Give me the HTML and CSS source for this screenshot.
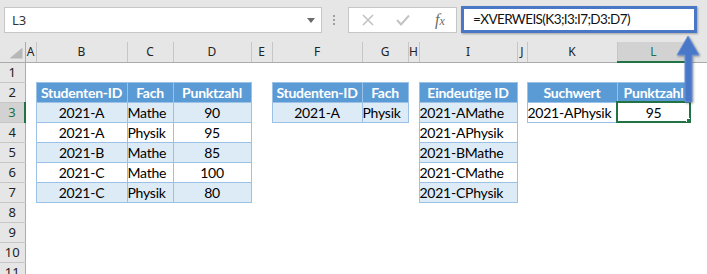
FILE: index.html
```html
<!DOCTYPE html>
<html lang="de">
<head>
  <meta charset="UTF-8">
  <title>XVERWEIS</title>
  <link rel="stylesheet" href="styles.css">
</head>
<body>
  <div class="app">
    <div class="formula-bar">
      <div class="name-box">
        <span>L3</span>
        <span class="caret"></span>
      </div>
      <div class="grip"><i></i><i></i><i></i></div>
      <div class="fx-box">
        <svg class="icon" width="14" height="14" viewBox="0 0 14 14">
          <path d="M2 2 L12 12 M12 2 L2 12" stroke="#c3c3c3" stroke-width="1.6" fill="none"/>
        </svg>
        <svg class="icon" width="16" height="14" viewBox="0 0 16 14">
          <path d="M2 7 L6 11.5 L14 2.5" stroke="#c3c3c3" stroke-width="2" fill="none"/>
        </svg>
        <span class="fx">f<small>x</small></span>
      </div>
      <div class="formula">=XVERWEIS(K3;I3:I7;D3:D7)</div>
    </div>

    <table class="sheet">
      <colgroup>
        <col class="w25"><col class="w11"><col class="w91"><col class="w46"><col class="w78">
        <col class="w21"><col class="w90"><col class="w46"><col class="w11"><col class="w98">
        <col class="w10"><col class="w90"><col class="w73"><col>
      </colgroup>
      <tr class="cols">
        <th class="corner"></th>
        <th>A</th><th>B</th><th>C</th><th>D</th><th>E</th><th>F</th><th>G</th>
        <th>H</th><th>I</th><th>J</th><th>K</th><th class="sel-col">L</th><th class="last"></th>
      </tr>
      <tr>
        <th class="row">1</th>
        <td></td><td></td><td></td><td></td><td></td><td></td><td></td><td></td><td></td><td></td><td></td><td></td><td></td>
      </tr>
      <tr>
        <th class="row">2</th>
        <td></td>
        <td class="hd">Studenten-ID</td><td class="hd">Fach</td><td class="hd">Punktzahl</td>
        <td></td>
        <td class="hd">Studenten-ID</td><td class="hd">Fach</td>
        <td></td>
        <td class="hd">Eindeutige ID</td>
        <td></td>
        <td class="hd">Suchwert</td><td class="hd">Punktzahl</td>
        <td></td>
      </tr>
      <tr>
        <th class="row sel-row">3</th>
        <td></td>
        <td class="c band ctr">2021-A</td><td class="c band">Mathe</td><td class="c band ctr">90</td>
        <td></td>
        <td class="c band ctr">2021-A</td><td class="c band">Physik</td>
        <td></td>
        <td class="c band">2021-AMathe</td>
        <td></td>
        <td class="c">2021-APhysik</td><td class="c ctr active">95</td>
        <td></td>
      </tr>
      <tr>
        <th class="row">4</th>
        <td></td>
        <td class="c ctr">2021-A</td><td class="c">Physik</td><td class="c ctr">95</td>
        <td></td><td></td><td></td><td></td>
        <td class="c">2021-APhysik</td>
        <td></td><td></td><td></td><td></td>
      </tr>
      <tr>
        <th class="row">5</th>
        <td></td>
        <td class="c band ctr">2021-B</td><td class="c band">Mathe</td><td class="c band ctr">85</td>
        <td></td><td></td><td></td><td></td>
        <td class="c band">2021-BMathe</td>
        <td></td><td></td><td></td><td></td>
      </tr>
      <tr>
        <th class="row">6</th>
        <td></td>
        <td class="c ctr">2021-C</td><td class="c">Mathe</td><td class="c ctr">100</td>
        <td></td><td></td><td></td><td></td>
        <td class="c">2021-CMathe</td>
        <td></td><td></td><td></td><td></td>
      </tr>
      <tr>
        <th class="row">7</th>
        <td></td>
        <td class="c band ctr">2021-C</td><td class="c band">Physik</td><td class="c band ctr">80</td>
        <td></td><td></td><td></td><td></td>
        <td class="c band">2021-CPhysik</td>
        <td></td><td></td><td></td><td></td>
      </tr>
      <tr>
        <th class="row">8</th>
        <td></td><td></td><td></td><td></td><td></td><td></td><td></td><td></td><td></td><td></td><td></td><td></td><td></td>
      </tr>
      <tr>
        <th class="row">9</th>
        <td></td><td></td><td></td><td></td><td></td><td></td><td></td><td></td><td></td><td></td><td></td><td></td><td></td>
      </tr>
      <tr>
        <th class="row">10</th>
        <td></td><td></td><td></td><td></td><td></td><td></td><td></td><td></td><td></td><td></td><td></td><td></td><td></td>
      </tr>
      <tr>
        <th class="row">11</th>
        <td></td><td></td><td></td><td></td><td></td><td></td><td></td><td></td><td></td><td></td><td></td><td></td><td></td>
      </tr>
    </table>

    <svg class="arrow" width="26" height="70" viewBox="0 0 26 70">
      <path d="M12 2 L23 21 L16 21 L16 68 L9 68 L9 21 L1 21 Z" fill="#4a78c8" stroke="#6a92d6" stroke-width="1"/>
    </svg>
  </div>
</body>
</html>
```

FILE: styles.css
```css
body {
  margin: 0;
  background: #ffffff;
  font-family: "Noto Sans", sans-serif;
}
.app {
  position: relative;
  width: 707px;
  height: 274px;
  overflow: hidden;
}
.formula-bar {
  display: flex;
  align-items: flex-start;
  height: 42px;
  padding: 7px 0 0 4px;
  box-sizing: border-box;
  background: #e6e6e6;
}
.name-box {
  display: flex;
  align-items: center;
  justify-content: space-between;
  width: 318px;
  height: 26px;
  box-sizing: border-box;
  padding: 0 6px 0 7px;
  background: #ffffff;
  border: 1px solid #c6c6c6;
  font-size: 13px;
  color: #333;
}
.caret {
  width: 0;
  height: 0;
  border-left: 4px solid transparent;
  border-right: 4px solid transparent;
  border-top: 5px solid #6b6b6b;
}
.grip {
  display: flex;
  flex-direction: column;
  gap: 2px;
  margin: 8px 13px 0 11px;
}
.grip i {
  width: 2px;
  height: 2px;
  background: #a0a0a0;
}
.fx-box {
  display: flex;
  align-items: center;
  gap: 20px;
  width: 109px;
  height: 26px;
  box-sizing: border-box;
  padding-left: 12px;
  background: #ffffff;
  border: 1px solid #c6c6c6;
}
.fx {
  font-family: "Liberation Serif", serif;
  font-style: italic;
  font-size: 16px;
  color: #6b6b6b;
  margin-left: 4px;
}
.fx small {
  font-size: 12px;
}
.formula {
  margin-left: 4px;
  margin-top: -1px;
  width: 236px;
  height: 27px;
  box-sizing: border-box;
  padding: 0 0 0 9px;
  line-height: 21px;
  background: #ffffff;
  border: 3px solid #4a76c6;
  box-shadow: 1px 1px 2px rgba(0, 0, 0, 0.3);
  font-family: Lato, sans-serif;
  font-size: 13.5px;
  letter-spacing: -0.6px;
  color: #111;
}
.sheet {
  table-layout: fixed;
  width: 707px;
  border-collapse: collapse;
  font-family: Lato, sans-serif;
  font-size: 14px;
  letter-spacing: -0.25px;
  color: #000;
}
.w25 { width: 25px; }
.w11 { width: 11px; }
.w91 { width: 91px; }
.w46 { width: 46px; }
.w78 { width: 78px; }
.w21 { width: 21px; }
.w90 { width: 90px; }
.w98 { width: 98px; }
.w10 { width: 10px; }
.w73 { width: 73px; }
.sheet tr {
  height: 20px;
}
.sheet th,
.sheet td {
  padding: 0;
  white-space: nowrap;
  overflow: hidden;
}
.cols th {
  background: #e6e6e6;
  border-right: 1px solid #c6c6c6;
  border-bottom: 1px solid #ababab;
  font-family: "Noto Sans", sans-serif;
  font-weight: normal;
  font-size: 12px;
  letter-spacing: 0;
  color: #222;
  text-align: center;
}
.cols th.last {
  border-right: none;
}
.cols th.corner {
  position: relative;
  border-right: 1px solid #ababab;
}
.corner::after {
  content: "";
  position: absolute;
  right: 2px;
  bottom: 3px;
  width: 13px;
  height: 11px;
  background: #b7b7b7;
  clip-path: polygon(100% 0, 100% 100%, 0 100%);
}
.cols th.sel-col {
  background: #d2d2d2;
  color: #217346;
  border-bottom: 2px solid #217346;
}
th.row {
  background: #e6e6e6;
  border-right: 1px solid #ababab;
  border-bottom: 1px solid #c6c6c6;
  font-family: "Noto Sans", sans-serif;
  font-weight: normal;
  font-size: 13px;
  letter-spacing: 0;
  color: #222;
  text-align: center;
}
th.row.sel-row {
  background: #d2d2d2;
  color: #217346;
  border-right: 2px solid #217346;
}
.hd {
  background: #5b9bd5;
  border: 1px solid #9bc2e6;
  color: #ffffff;
  font-weight: bold;
  text-align: center;
}
.c {
  border: 1px solid #9bc2e6;
  padding-left: 3px;
}
.band {
  background: #ddebf7;
}
.ctr {
  text-align: center;
}
.sheet td.c.ctr {
  padding-left: 0;
}
.active {
  position: relative;
  outline: 2px solid #217346;
  outline-offset: -1px;
}
.active::after {
  content: "";
  position: absolute;
  right: -3px;
  bottom: -3px;
  width: 5px;
  height: 5px;
  background: #217346;
  border: 1px solid #ffffff;
}
.arrow {
  position: absolute;
  left: 676px;
  top: 34px;
  filter: drop-shadow(1px 1px 1px rgba(0, 0, 0, 0.35));
}
```
